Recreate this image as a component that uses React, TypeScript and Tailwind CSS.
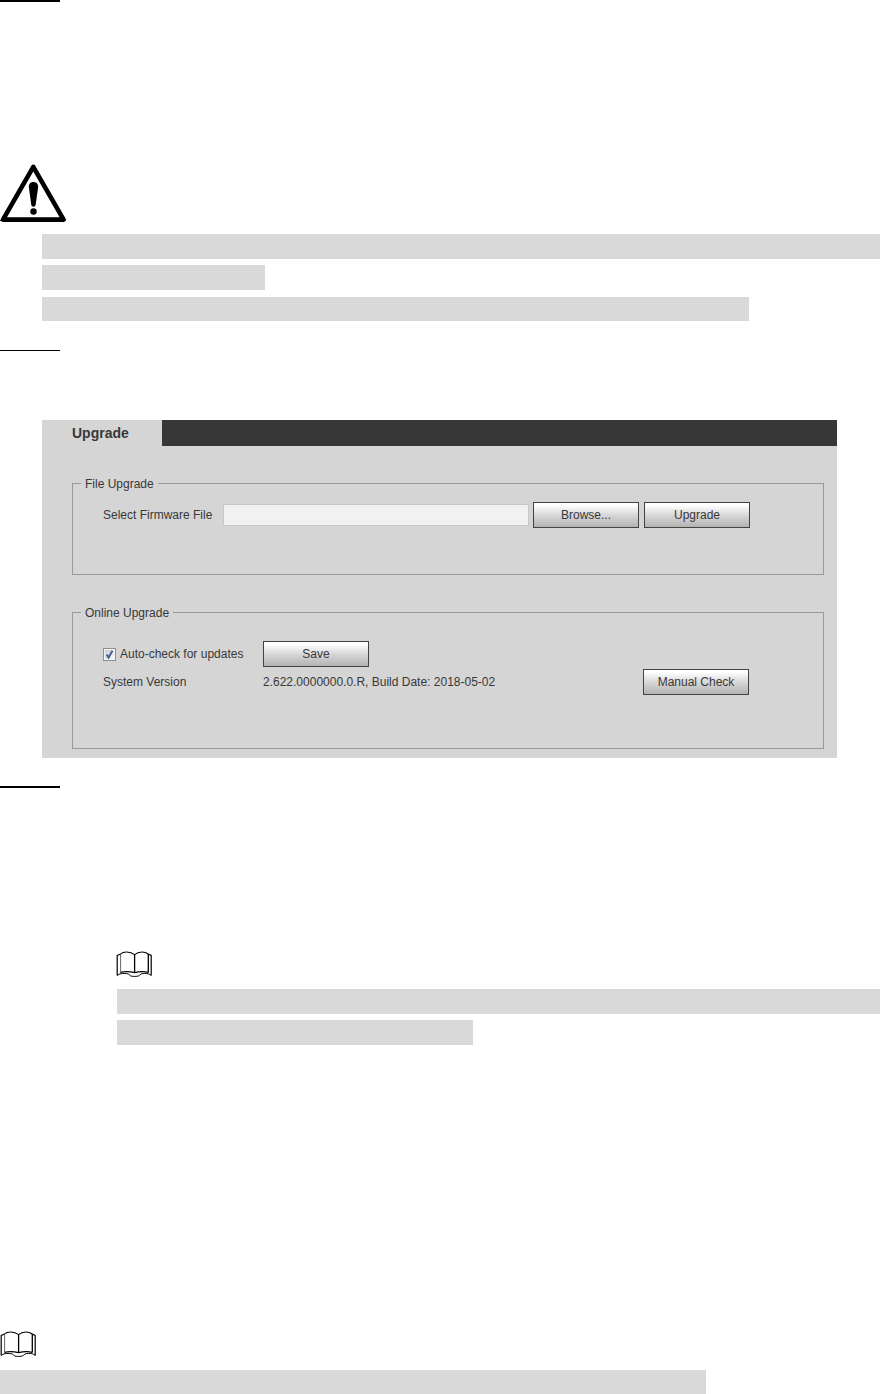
import type { ReactNode } from "react";

const buttonClass =
    "h-[26px] w-[106px] shrink-0 border border-[#434343] bg-linear-to-b from-white from-10% via-[#d9d8d9] via-50% to-[#b4b2b3] text-center text-[#383838]";

function WarningIcon() {
    return (
        <svg width="67" height="58" viewBox="0 0 67 58" role="img" aria-label="Caution">
            <path d="M33.3 2.8 L63.6 55.6 H3 Z" fill="none" stroke="#000" strokeWidth="4.6" strokeLinejoin="round" />
            <path d="M0 56.5 H4" stroke="#000" strokeWidth="1" />
            <path d="M33.4 18 C36.6 18 38.4 20.2 38.1 23.4 L35.6 41 C35.2 43.3 31.7 43.3 31.3 41 L28.9 23.4 C28.6 20.2 30.2 18 33.4 18 Z" fill="#000" />
            <circle cx="33.5" cy="47.5" r="3.2" fill="#000" />
        </svg>
    );
}

function BookIcon() {
    return (
        <svg width="36" height="28" viewBox="0 0 36 28" role="img" aria-label="Note" fill="none" stroke="#000">
            <path d="M4.6 4 C7 1.4 14 1 18.6 4.6 C23 1 29 1.4 32.2 4" strokeWidth="1.1" />
            <path d="M18.6 4.4 V22.5" strokeWidth="1.3" />
            <path d="M4.6 4 V22.5" strokeWidth="1" stroke="#666" />
            <path d="M32.3 4 V22.5" strokeWidth="1.3" />
            <path d="M4.6 4 L1.2 5.4 V25.6 M32.2 4 L35.2 5.4 V25.6" strokeWidth="1.2" />
            <path d="M4.6 22.3 C9 21.4 14 21.6 18.6 22.6 C23 21.6 28 21.4 32.3 22.3" strokeWidth="1.2" />
            <path d="M1.2 25.4 L4 23.8 C8 23.4 10 23.4 12.4 23.9 C14 26 15 26.4 18.6 26.4 C22.2 26.4 23.2 26 25 23.9 C27 23.4 30 23.4 32.6 23.8 L35.2 25.4" strokeWidth="1" />
        </svg>
    );
}

function Group({ title, className, children }: { title: string; className: string; children: ReactNode }) {
    return (
        <fieldset className={`border border-[#999999] pl-[30px] ${className}`}>
            <legend className="-ml-[22px] px-1 pt-0.5 leading-[13px]">{title}</legend>
            {children}
        </fieldset>
    );
}

function UpgradePanel() {
    return (
        <section className="bg-[#d5d5d5] font-['Liberation_Sans',Arial,sans-serif] text-[12px] leading-4 text-[#383838]">
            <div className="flex h-[26px] bg-[#373737]">
                <h1 className="w-[120px] bg-[#d5d5d5] pl-[30px] text-[14px] font-bold leading-[26px]">Upgrade</h1>
            </div>

            <form className="flex flex-col gap-[30px] pb-[9px] pl-[30px] pr-[13px] pt-[30px]" onSubmit={(e) => e.preventDefault()}>
                <Group title="File Upgrade" className="pb-[46px] pr-[73px] pt-[11px]">
                    <div className="flex items-center">
                        <label htmlFor="firmware" className="w-[120px] shrink-0">Select Firmware File</label>
                        <input id="firmware" type="text" readOnly className="h-[22px] min-w-0 flex-1 border border-[#c8c8c8] bg-[#f1f1f1] px-1" />
                        <button type="button" className={`ml-1 ${buttonClass}`}>Browse...</button>
                        <button type="submit" className={`ml-[5px] ${buttonClass}`}>Upgrade</button>
                    </div>
                </Group>

                <Group title="Online Upgrade" className="pb-[53px] pr-[74px] pt-[21px]">
                    <div className="flex items-center">
                        <label className="flex w-[160px] shrink-0 items-center gap-1">
                            <span className="grid size-[13px]">
                                <input
                                    type="checkbox"
                                    defaultChecked
                                    className="peer col-start-1 row-start-1 size-[13px] appearance-none border border-[#8e8f8f] bg-linear-to-br from-[#c4cad4] to-white shadow-[inset_0_0_0_1px_#f4f4f4]"
                                />
                                <svg viewBox="0 0 13 13" className="pointer-events-none col-start-1 row-start-1 size-[13px] opacity-0 peer-checked:opacity-100">
                                    <path d="M3.6 6.6 L5.6 9.6 L9.4 2.8" fill="none" stroke="#4a5f97" strokeWidth="2" />
                                </svg>
                            </span>
                            Auto-check for updates
                        </label>
                        <button type="button" className={buttonClass}>Save</button>
                    </div>
                    <div className="mt-0.5 flex items-center">
                        <span className="w-[160px] shrink-0">System Version</span>
                        <span className="flex-1">2.622.0000000.0.R, Build Date: 2018-05-02</span>
                        <button type="button" className={buttonClass}>Manual Check</button>
                    </div>
                </Group>
            </form>
        </section>
    );
}

export default function App() {
    return (
        <main className="bg-white">
            <div className="h-0.5 w-[60px] bg-black" />

            {/* Caution */}
            <div className="pt-[162px]">
                <WarningIcon />
            </div>
            <div className="flex flex-col pl-[42px] pt-3">
                <div className="h-[25px] bg-[#d9d9d9]" />
                <div className="mt-1.5 h-[25px] w-[223px] bg-[#d9d9d9]" />
                <div className="mt-[7px] h-6 w-[707px] max-w-full bg-[#d9d9d9]" />
            </div>

            <div className="mt-[29px] h-px w-[60px] bg-black" />
            <div className="pl-[42px] pr-[43px] pt-[69px]">
                <UpgradePanel />
            </div>
            <div className="mt-7 h-0.5 w-[60px] bg-black" />

            {/* Notes */}
            <div className="pl-[116px] pt-[162px]">
                <BookIcon />
                <div className="pl-px">
                    <div className="mt-[11px] h-[25px] bg-[#d9d9d9]" />
                    <div className="mt-1.5 h-[25px] w-[356px] max-w-full bg-[#d9d9d9]" />
                </div>
            </div>
            <div className="pt-[285px]">
                <BookIcon />
                <div className="mt-3 h-6 w-[706px] max-w-full bg-[#d9d9d9]" />
            </div>
        </main>
    );
}
